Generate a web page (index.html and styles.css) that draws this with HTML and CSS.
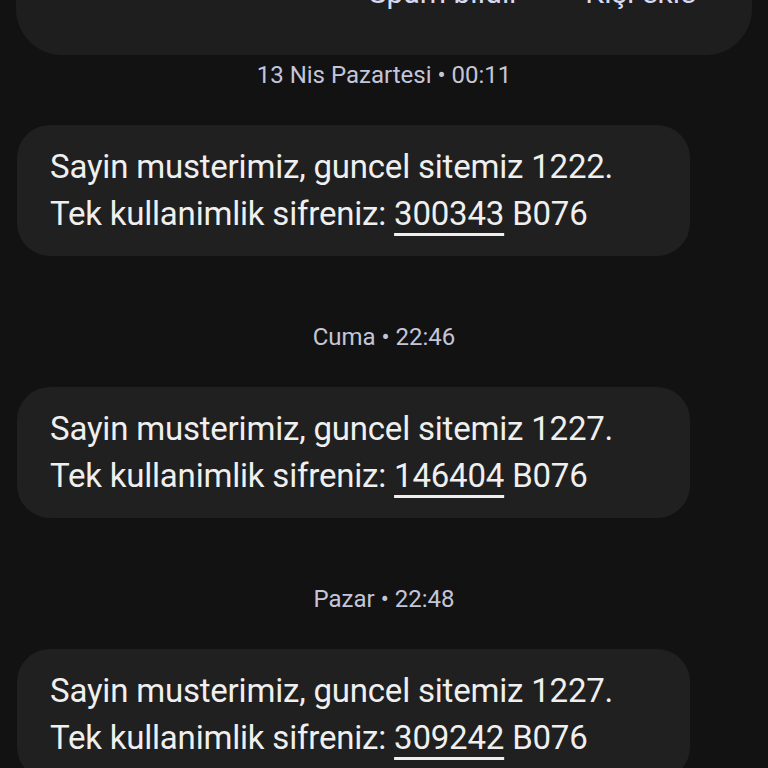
FILE: index.html
```html
<!DOCTYPE html>
<html lang="tr">
  <head>
    <meta charset="UTF-8" />
    <meta name="viewport" content="width=device-width, initial-scale=1.0" />
    <title>Mesajlar</title>
    <link rel="stylesheet" href="styles.css">
  </head>
  <body>
    <div class="sender-card">
      <div class="sender-actions">
        <span class="action spam">Spam bildir</span>
        <span class="action">Kişi ekle</span>
      </div>
    </div>

    <div class="thread">
      <div class="stamp first">13 Nis Pazartesi • 00:11</div>
      <div class="bubble">
        <p>Sayin musterimiz, guncel sitemiz 1222.</p>
        <p>Tek kullanimlik sifreniz: <span class="code">300343</span> B076</p>
      </div>

      <div class="stamp">Cuma • 22:46</div>
      <div class="bubble">
        <p>Sayin musterimiz, guncel sitemiz 1227.</p>
        <p>Tek kullanimlik sifreniz: <span class="code">146404</span> B076</p>
      </div>

      <div class="stamp">Pazar • 22:48</div>
      <div class="bubble">
        <p>Sayin musterimiz, guncel sitemiz 1227.</p>
        <p>Tek kullanimlik sifreniz: <span class="code">309242</span> B076</p>
      </div>
    </div>
  </body>
</html>
```

FILE: styles.css
```css
body {
  margin: 0;
  padding: 0;
  background-color: #121212;
  font-family: Roboto, "Noto Sans", sans-serif;
  overflow: hidden;
  height: 768px;
}

.sender-card {
  margin: -60px 16px 0 16px;
  height: 115px;
  background-color: #1e1e1e;
  border-radius: 0 0 46px 46px;
}

.sender-actions {
  display: flex;
  justify-content: flex-end;
  gap: 66px;
  padding-right: 56px;
  color: #d7daf2;
  font-size: 30px;
  line-height: 36px;
  padding-top: 35px;
}

.thread {
  display: flex;
  flex-direction: column;
}

.stamp {
  text-align: center;
  color: #c4c6d8;
  font-size: 24px;
  line-height: 30px;
  margin: 66px 0 35px 0;
}

.stamp.first {
  margin-top: 5px;
}

.bubble {
  width: 640px;
  margin-left: 17px;
  padding: 18px 0 19px 33px;
  background-color: #202020;
  border-radius: 33px;
  color: #efefef;
  font-size: 33px;
  letter-spacing: -0.2px;
  line-height: 47px;
}

.bubble p {
  margin: 0;
}

.code {
  text-decoration: underline;
  text-decoration-thickness: 3px;
  text-underline-offset: 8px;
}
```
